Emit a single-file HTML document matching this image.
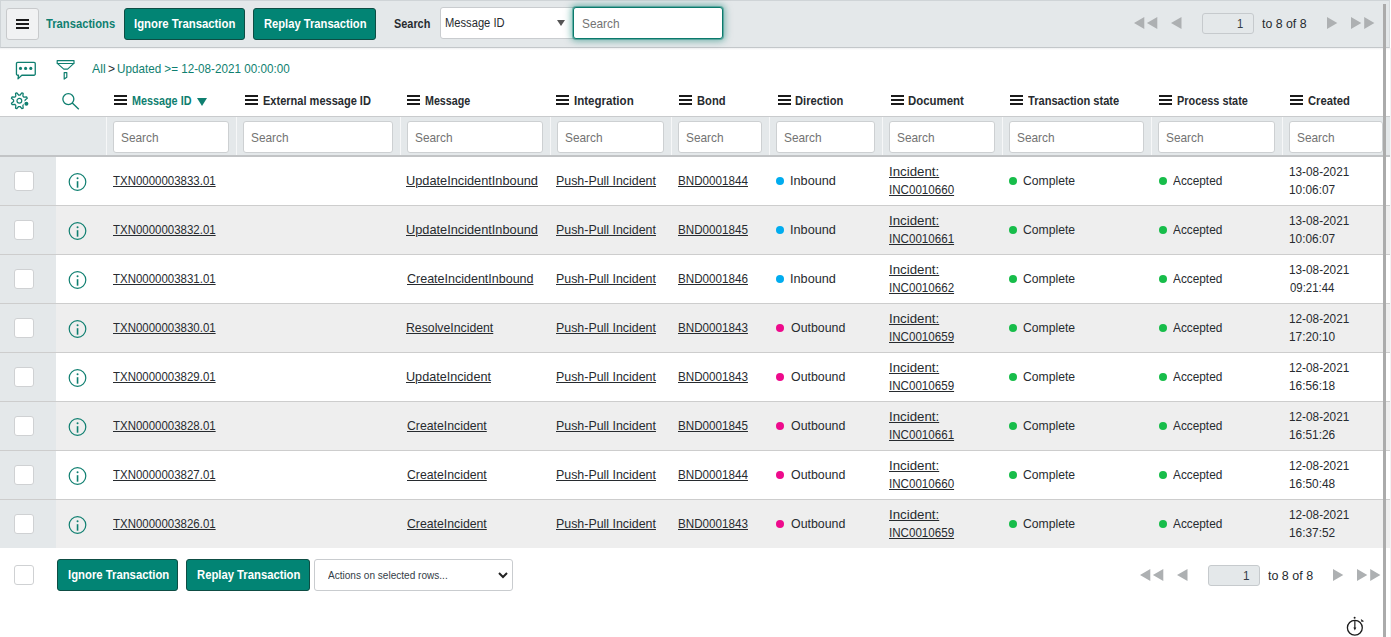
<!DOCTYPE html>
<html><head><meta charset="utf-8">
<style>
html,body{margin:0;padding:0;width:1391px;height:637px;overflow:hidden;background:#fff;position:relative;font-family:"Liberation Sans",sans-serif;}
.a{position:absolute;box-sizing:border-box;}
.t{position:absolute;white-space:nowrap;line-height:20px;transform-origin:0 0;font-family:"Liberation Sans",sans-serif;}
svg{position:absolute;overflow:visible;}
</style></head><body>
<div class="a" style="left:0px;top:0px;width:1390px;height:48px;background:#e4e8ea;border-top:1px solid #cfd4d7;border-left:1px solid #cfd4d7;border-right:1px solid #d6dadd;border-bottom:1px solid #c3c7ca"></div>
<div class="a" style="left:0px;top:48px;width:1390px;height:2px;background:linear-gradient(#eef0f1,#fff)"></div>
<div class="a" style="left:6px;top:8px;width:33px;height:32px;background:#f1f2f3;border:1px solid #c8cacc;border-radius:3px"></div>
<div class="a" style="left:16px;top:19px;width:13px;height:2px;background:#1b1b1b"></div><div class="a" style="left:16px;top:23px;width:13px;height:2px;background:#1b1b1b"></div><div class="a" style="left:16px;top:27px;width:13px;height:2px;background:#1b1b1b"></div>
<div class="a" style="left:124px;top:8px;width:121px;height:32px;background:#028474;border:1px solid #0e4d44;border-radius:3px"></div>
<div class="a" style="left:253px;top:8px;width:123px;height:32px;background:#028474;border:1px solid #0e4d44;border-radius:3px"></div>
<div class="a" style="left:440px;top:7px;width:140px;height:32px;background:#fff;border:1px solid #c9cccf;border-radius:3px"></div>
<svg style="left:557px;top:20px" width="8" height="6"><path d="M0 0h8L4 6z" fill="#555"/></svg>
<div class="a" style="left:573px;top:7px;width:150px;height:32px;background:#fff;border:1px solid #0b7a6c;border-radius:3px;box-shadow:0 0 0 1px rgba(0,125,110,.4),0 0 7px 2px rgba(0,125,110,.5)"></div>
<svg style="left:1133.6px;top:17px" width="24" height="12"><path d="M0 6L10.3 0V12z M12.9 6L23.3 0V12z" fill="#adb0b2"/></svg>
<svg style="left:1171px;top:17px" width="11" height="12"><path d="M0 6L10.5 0V12z" fill="#adb0b2"/></svg>
<div class="a" style="left:1202px;top:13px;width:52px;height:21px;background:#e4e8ea;border:1px solid #c6cacd;border-radius:3px"></div>
<svg style="left:1327px;top:17px" width="11" height="12"><path d="M10.3 6L0 0V12z" fill="#adb0b2"/></svg>
<svg style="left:1351.4px;top:17px" width="24" height="12"><path d="M10.3 6L0 0V12z M23.4 6L13.2 0V12z" fill="#adb0b2"/></svg>
<svg style="left:15px;top:61px" width="22" height="20"><path d="M3.5 14.25H2.7a1.25 1.25 0 0 1-1.25-1.25V2.7A1.25 1.25 0 0 1 2.7 1.45h16.3a1.25 1.25 0 0 1 1.25 1.25V13a1.25 1.25 0 0 1-1.25 1.25H6.8L3 17.9z" fill="none" stroke="#0f7f70" stroke-width="1.3" stroke-linejoin="round"/><circle cx="5.5" cy="7.4" r="1.55" fill="#0f7f70"/><circle cx="10.6" cy="7.4" r="1.55" fill="#0f7f70"/><circle cx="15.8" cy="7.4" r="1.55" fill="#0f7f70"/></svg>
<svg style="left:56px;top:59px" width="20" height="22"><path d="M1.2 1.6H18V4.5H1.2Z M1.6 4.6L7.8 10.1H11.6L17.6 4.6 M8.2 13.6H10.8V18.3L8.2 20.1Z" fill="none" stroke="#0f7f70" stroke-width="1.2" stroke-linejoin="round"/></svg>
<svg style="left:9px;top:90px" width="22" height="22"><path d="M11.11 5.00 L12.85 2.83 L14.18 3.39 L13.88 6.15 L14.95 7.22 L17.71 6.92 L18.27 8.25 L16.10 9.99 L16.10 11.51 L18.27 13.25 L17.71 14.58 L14.95 14.28 L13.88 15.35 L14.18 18.11 L12.85 18.67 L11.11 16.50 L9.59 16.50 L7.85 18.67 L6.52 18.11 L6.82 15.35 L5.75 14.28 L2.99 14.58 L2.43 13.25 L4.60 11.51 L4.60 9.99 L2.43 8.25 L2.99 6.92 L5.75 7.22 L6.82 6.15 L6.52 3.39 L7.85 2.83 L9.59 5.00Z" fill="none" stroke="#0f7f70" stroke-width="1.25" stroke-linejoin="round"/><circle cx="10.35" cy="10.75" r="2.4" fill="none" stroke="#0f7f70" stroke-width="1.2"/><circle cx="17.4" cy="13.7" r="2.9" fill="#fff"/><circle cx="17.4" cy="13.7" r="2" fill="#0f7f70"/></svg>
<svg style="left:61px;top:92px" width="20" height="20"><circle cx="7.35" cy="7.1" r="5.5" fill="none" stroke="#0f7f70" stroke-width="1.3"/><path d="M11.3 11.1L17.8 17.2" stroke="#0f7f70" stroke-width="1.4"/></svg>
<div class="a" style="left:114px;top:95px;width:13px;height:2px;background:#1b1b1b"></div><div class="a" style="left:114px;top:99px;width:13px;height:2px;background:#1b1b1b"></div><div class="a" style="left:114px;top:103px;width:13px;height:2px;background:#1b1b1b"></div>
<div class="a" style="left:245px;top:95px;width:13px;height:2px;background:#1b1b1b"></div><div class="a" style="left:245px;top:99px;width:13px;height:2px;background:#1b1b1b"></div><div class="a" style="left:245px;top:103px;width:13px;height:2px;background:#1b1b1b"></div>
<div class="a" style="left:407px;top:95px;width:13px;height:2px;background:#1b1b1b"></div><div class="a" style="left:407px;top:99px;width:13px;height:2px;background:#1b1b1b"></div><div class="a" style="left:407px;top:103px;width:13px;height:2px;background:#1b1b1b"></div>
<div class="a" style="left:556px;top:95px;width:13px;height:2px;background:#1b1b1b"></div><div class="a" style="left:556px;top:99px;width:13px;height:2px;background:#1b1b1b"></div><div class="a" style="left:556px;top:103px;width:13px;height:2px;background:#1b1b1b"></div>
<div class="a" style="left:679px;top:95px;width:13px;height:2px;background:#1b1b1b"></div><div class="a" style="left:679px;top:99px;width:13px;height:2px;background:#1b1b1b"></div><div class="a" style="left:679px;top:103px;width:13px;height:2px;background:#1b1b1b"></div>
<div class="a" style="left:778px;top:95px;width:13px;height:2px;background:#1b1b1b"></div><div class="a" style="left:778px;top:99px;width:13px;height:2px;background:#1b1b1b"></div><div class="a" style="left:778px;top:103px;width:13px;height:2px;background:#1b1b1b"></div>
<div class="a" style="left:891px;top:95px;width:13px;height:2px;background:#1b1b1b"></div><div class="a" style="left:891px;top:99px;width:13px;height:2px;background:#1b1b1b"></div><div class="a" style="left:891px;top:103px;width:13px;height:2px;background:#1b1b1b"></div>
<div class="a" style="left:1010px;top:95px;width:13px;height:2px;background:#1b1b1b"></div><div class="a" style="left:1010px;top:99px;width:13px;height:2px;background:#1b1b1b"></div><div class="a" style="left:1010px;top:103px;width:13px;height:2px;background:#1b1b1b"></div>
<div class="a" style="left:1159px;top:95px;width:13px;height:2px;background:#1b1b1b"></div><div class="a" style="left:1159px;top:99px;width:13px;height:2px;background:#1b1b1b"></div><div class="a" style="left:1159px;top:103px;width:13px;height:2px;background:#1b1b1b"></div>
<div class="a" style="left:1290px;top:95px;width:13px;height:2px;background:#1b1b1b"></div><div class="a" style="left:1290px;top:99px;width:13px;height:2px;background:#1b1b1b"></div><div class="a" style="left:1290px;top:103px;width:13px;height:2px;background:#1b1b1b"></div>
<svg style="left:197px;top:98px" width="10" height="8"><path d="M0 0h10L5 8z" fill="#0f7f70"/></svg>
<div class="a" style="left:0px;top:116px;width:1390px;height:41px;background:#e4e8ea;border-top:1px solid #c9cbcd;border-bottom:2px solid #c2c4c6"></div>
<div class="a" style="left:106px;top:117px;width:1px;height:38px;background:#f6f7f8"></div>
<div class="a" style="left:113px;top:121px;width:116px;height:32px;background:#fff;border:1px solid #cdd0d2;border-radius:3px"></div>
<div class="a" style="left:236px;top:117px;width:1px;height:38px;background:#f6f7f8"></div>
<div class="a" style="left:243px;top:121px;width:150px;height:32px;background:#fff;border:1px solid #cdd0d2;border-radius:3px"></div>
<div class="a" style="left:400px;top:117px;width:1px;height:38px;background:#f6f7f8"></div>
<div class="a" style="left:407px;top:121px;width:136px;height:32px;background:#fff;border:1px solid #cdd0d2;border-radius:3px"></div>
<div class="a" style="left:550px;top:117px;width:1px;height:38px;background:#f6f7f8"></div>
<div class="a" style="left:557px;top:121px;width:107px;height:32px;background:#fff;border:1px solid #cdd0d2;border-radius:3px"></div>
<div class="a" style="left:671px;top:117px;width:1px;height:38px;background:#f6f7f8"></div>
<div class="a" style="left:678px;top:121px;width:84px;height:32px;background:#fff;border:1px solid #cdd0d2;border-radius:3px"></div>
<div class="a" style="left:769px;top:117px;width:1px;height:38px;background:#f6f7f8"></div>
<div class="a" style="left:776px;top:121px;width:99px;height:32px;background:#fff;border:1px solid #cdd0d2;border-radius:3px"></div>
<div class="a" style="left:882px;top:117px;width:1px;height:38px;background:#f6f7f8"></div>
<div class="a" style="left:889px;top:121px;width:106px;height:32px;background:#fff;border:1px solid #cdd0d2;border-radius:3px"></div>
<div class="a" style="left:1002px;top:117px;width:1px;height:38px;background:#f6f7f8"></div>
<div class="a" style="left:1009px;top:121px;width:135px;height:32px;background:#fff;border:1px solid #cdd0d2;border-radius:3px"></div>
<div class="a" style="left:1151px;top:117px;width:1px;height:38px;background:#f6f7f8"></div>
<div class="a" style="left:1158px;top:121px;width:117px;height:32px;background:#fff;border:1px solid #cdd0d2;border-radius:3px"></div>
<div class="a" style="left:1282px;top:117px;width:1px;height:38px;background:#f6f7f8"></div>
<div class="a" style="left:1289px;top:121px;width:94px;height:32px;background:#fff;border:1px solid #cdd0d2;border-radius:3px"></div>
<div class="a" style="left:0px;top:157px;width:1390px;height:49px;background:#fff;border-bottom:1px solid #cdcdcd"></div>
<div class="a" style="left:0px;top:157px;width:56px;height:49px;background:#e4e8ea;border-bottom:1px solid #cdcdcd"></div>
<div class="a" style="left:14px;top:171px;width:20px;height:20px;background:#fff;border:1px solid #cfd1d3;border-radius:3px"></div>
<svg style="left:68px;top:172px" width="20" height="20"><circle cx="9.5" cy="10" r="8.3" fill="none" stroke="#0f7f70" stroke-width="1.2"/><rect x="8.75" y="9.2" width="1.6" height="6.5" fill="#0f7f70"/><circle cx="9.55" cy="6.2" r="1" fill="#0f7f70"/></svg>
<div class="a" style="left:776px;top:177px;width:8px;height:8px;border-radius:50%;background:#00acef"></div>
<div class="a" style="left:1009px;top:177px;width:8px;height:8px;border-radius:50%;background:#17bd4a"></div>
<div class="a" style="left:1159px;top:177px;width:8px;height:8px;border-radius:50%;background:#17bd4a"></div>
<div class="a" style="left:0px;top:206px;width:1390px;height:49px;background:#eeeeee;border-bottom:1px solid #cdcdcd"></div>
<div class="a" style="left:0px;top:206px;width:56px;height:49px;background:#e4e8ea;border-bottom:1px solid #cdcdcd"></div>
<div class="a" style="left:14px;top:220px;width:20px;height:20px;background:#fff;border:1px solid #cfd1d3;border-radius:3px"></div>
<svg style="left:68px;top:221px" width="20" height="20"><circle cx="9.5" cy="10" r="8.3" fill="none" stroke="#0f7f70" stroke-width="1.2"/><rect x="8.75" y="9.2" width="1.6" height="6.5" fill="#0f7f70"/><circle cx="9.55" cy="6.2" r="1" fill="#0f7f70"/></svg>
<div class="a" style="left:776px;top:226px;width:8px;height:8px;border-radius:50%;background:#00acef"></div>
<div class="a" style="left:1009px;top:226px;width:8px;height:8px;border-radius:50%;background:#17bd4a"></div>
<div class="a" style="left:1159px;top:226px;width:8px;height:8px;border-radius:50%;background:#17bd4a"></div>
<div class="a" style="left:0px;top:255px;width:1390px;height:49px;background:#fff;border-bottom:1px solid #cdcdcd"></div>
<div class="a" style="left:0px;top:255px;width:56px;height:49px;background:#e4e8ea;border-bottom:1px solid #cdcdcd"></div>
<div class="a" style="left:14px;top:269px;width:20px;height:20px;background:#fff;border:1px solid #cfd1d3;border-radius:3px"></div>
<svg style="left:68px;top:270px" width="20" height="20"><circle cx="9.5" cy="10" r="8.3" fill="none" stroke="#0f7f70" stroke-width="1.2"/><rect x="8.75" y="9.2" width="1.6" height="6.5" fill="#0f7f70"/><circle cx="9.55" cy="6.2" r="1" fill="#0f7f70"/></svg>
<div class="a" style="left:776px;top:275px;width:8px;height:8px;border-radius:50%;background:#00acef"></div>
<div class="a" style="left:1009px;top:275px;width:8px;height:8px;border-radius:50%;background:#17bd4a"></div>
<div class="a" style="left:1159px;top:275px;width:8px;height:8px;border-radius:50%;background:#17bd4a"></div>
<div class="a" style="left:0px;top:304px;width:1390px;height:49px;background:#eeeeee;border-bottom:1px solid #cdcdcd"></div>
<div class="a" style="left:0px;top:304px;width:56px;height:49px;background:#e4e8ea;border-bottom:1px solid #cdcdcd"></div>
<div class="a" style="left:14px;top:318px;width:20px;height:20px;background:#fff;border:1px solid #cfd1d3;border-radius:3px"></div>
<svg style="left:68px;top:319px" width="20" height="20"><circle cx="9.5" cy="10" r="8.3" fill="none" stroke="#0f7f70" stroke-width="1.2"/><rect x="8.75" y="9.2" width="1.6" height="6.5" fill="#0f7f70"/><circle cx="9.55" cy="6.2" r="1" fill="#0f7f70"/></svg>
<div class="a" style="left:776px;top:324px;width:8px;height:8px;border-radius:50%;background:#ee0a8c"></div>
<div class="a" style="left:1009px;top:324px;width:8px;height:8px;border-radius:50%;background:#17bd4a"></div>
<div class="a" style="left:1159px;top:324px;width:8px;height:8px;border-radius:50%;background:#17bd4a"></div>
<div class="a" style="left:0px;top:353px;width:1390px;height:49px;background:#fff;border-bottom:1px solid #cdcdcd"></div>
<div class="a" style="left:0px;top:353px;width:56px;height:49px;background:#e4e8ea;border-bottom:1px solid #cdcdcd"></div>
<div class="a" style="left:14px;top:367px;width:20px;height:20px;background:#fff;border:1px solid #cfd1d3;border-radius:3px"></div>
<svg style="left:68px;top:368px" width="20" height="20"><circle cx="9.5" cy="10" r="8.3" fill="none" stroke="#0f7f70" stroke-width="1.2"/><rect x="8.75" y="9.2" width="1.6" height="6.5" fill="#0f7f70"/><circle cx="9.55" cy="6.2" r="1" fill="#0f7f70"/></svg>
<div class="a" style="left:776px;top:373px;width:8px;height:8px;border-radius:50%;background:#ee0a8c"></div>
<div class="a" style="left:1009px;top:373px;width:8px;height:8px;border-radius:50%;background:#17bd4a"></div>
<div class="a" style="left:1159px;top:373px;width:8px;height:8px;border-radius:50%;background:#17bd4a"></div>
<div class="a" style="left:0px;top:402px;width:1390px;height:49px;background:#eeeeee;border-bottom:1px solid #cdcdcd"></div>
<div class="a" style="left:0px;top:402px;width:56px;height:49px;background:#e4e8ea;border-bottom:1px solid #cdcdcd"></div>
<div class="a" style="left:14px;top:416px;width:20px;height:20px;background:#fff;border:1px solid #cfd1d3;border-radius:3px"></div>
<svg style="left:68px;top:417px" width="20" height="20"><circle cx="9.5" cy="10" r="8.3" fill="none" stroke="#0f7f70" stroke-width="1.2"/><rect x="8.75" y="9.2" width="1.6" height="6.5" fill="#0f7f70"/><circle cx="9.55" cy="6.2" r="1" fill="#0f7f70"/></svg>
<div class="a" style="left:776px;top:422px;width:8px;height:8px;border-radius:50%;background:#ee0a8c"></div>
<div class="a" style="left:1009px;top:422px;width:8px;height:8px;border-radius:50%;background:#17bd4a"></div>
<div class="a" style="left:1159px;top:422px;width:8px;height:8px;border-radius:50%;background:#17bd4a"></div>
<div class="a" style="left:0px;top:451px;width:1390px;height:49px;background:#fff;border-bottom:1px solid #cdcdcd"></div>
<div class="a" style="left:0px;top:451px;width:56px;height:49px;background:#e4e8ea;border-bottom:1px solid #cdcdcd"></div>
<div class="a" style="left:14px;top:465px;width:20px;height:20px;background:#fff;border:1px solid #cfd1d3;border-radius:3px"></div>
<svg style="left:68px;top:466px" width="20" height="20"><circle cx="9.5" cy="10" r="8.3" fill="none" stroke="#0f7f70" stroke-width="1.2"/><rect x="8.75" y="9.2" width="1.6" height="6.5" fill="#0f7f70"/><circle cx="9.55" cy="6.2" r="1" fill="#0f7f70"/></svg>
<div class="a" style="left:776px;top:471px;width:8px;height:8px;border-radius:50%;background:#ee0a8c"></div>
<div class="a" style="left:1009px;top:471px;width:8px;height:8px;border-radius:50%;background:#17bd4a"></div>
<div class="a" style="left:1159px;top:471px;width:8px;height:8px;border-radius:50%;background:#17bd4a"></div>
<div class="a" style="left:0px;top:500px;width:1390px;height:48px;background:#eeeeee"></div>
<div class="a" style="left:0px;top:500px;width:56px;height:48px;background:#e4e8ea"></div>
<div class="a" style="left:14px;top:514px;width:20px;height:20px;background:#fff;border:1px solid #cfd1d3;border-radius:3px"></div>
<svg style="left:68px;top:515px" width="20" height="20"><circle cx="9.5" cy="10" r="8.3" fill="none" stroke="#0f7f70" stroke-width="1.2"/><rect x="8.75" y="9.2" width="1.6" height="6.5" fill="#0f7f70"/><circle cx="9.55" cy="6.2" r="1" fill="#0f7f70"/></svg>
<div class="a" style="left:776px;top:520px;width:8px;height:8px;border-radius:50%;background:#ee0a8c"></div>
<div class="a" style="left:1009px;top:520px;width:8px;height:8px;border-radius:50%;background:#17bd4a"></div>
<div class="a" style="left:1159px;top:520px;width:8px;height:8px;border-radius:50%;background:#17bd4a"></div>
<div class="a" style="left:14px;top:565px;width:20px;height:20px;background:#fff;border:1px solid #cfd1d3;border-radius:3px"></div>
<div class="a" style="left:57px;top:559px;width:121px;height:32px;background:#028474;border:1px solid #0e4d44;border-radius:3px"></div>
<div class="a" style="left:186px;top:559px;width:124px;height:32px;background:#028474;border:1px solid #0e4d44;border-radius:3px"></div>
<div class="a" style="left:314px;top:559px;width:199px;height:32px;background:#fff;border:1px solid #c9cccf;border-radius:3px"></div>
<svg style="left:498px;top:572px" width="10" height="7"><path d="M1 1l4 4 4-4" fill="none" stroke="#222" stroke-width="2"/></svg>
<svg style="left:1139.8px;top:569px" width="24" height="12"><path d="M0 6L10.3 0V12z M12.9 6L23.3 0V12z" fill="#adb0b2"/></svg>
<svg style="left:1177px;top:569px" width="11" height="12"><path d="M0 6L10.5 0V12z" fill="#adb0b2"/></svg>
<div class="a" style="left:1208px;top:565px;width:52px;height:21px;background:#e4e8ea;border:1px solid #c6cacd;border-radius:3px"></div>
<svg style="left:1333.2px;top:569px" width="11" height="12"><path d="M10.3 6L0 0V12z" fill="#adb0b2"/></svg>
<svg style="left:1357.2px;top:569px" width="24" height="12"><path d="M10.3 6L0 0V12z M23.4 6L13.2 0V12z" fill="#adb0b2"/></svg>
<svg style="left:1345px;top:615px" width="22" height="22"><circle cx="9.85" cy="12.75" r="7.45" fill="none" stroke="#1b1b1b" stroke-width="1.3"/><path d="M9.85 5.3v8.2" stroke="#1b1b1b" stroke-width="1.2"/><path d="M8.4 12.6h2.9l-1.45 3z" fill="#1b1b1b"/><circle cx="9.6" cy="2.7" r="1" fill="#1b1b1b"/><path d="M15.8 4.1l3.3 2.1-2.5 0.9z" fill="#1b1b1b"/></svg>
<div class="a" style="left:1383px;top:4px;width:3px;height:633px;background:#ababab"></div>
<div class="a" style="left:1390px;top:48px;width:1px;height:589px;background:#f3f4f5"></div>
<span class="t" style="left:46.00px;top:14.0px;font-size:13px;font-weight:700;color:#0f7f70;transform:scaleX(0.8625);">Transactions</span>
<span class="t" style="left:134.00px;top:14.0px;font-size:12px;font-weight:700;color:#ffffff;transform:scaleX(0.9439);">Ignore Transaction</span>
<span class="t" style="left:263.70px;top:14.0px;font-size:12px;font-weight:700;color:#ffffff;transform:scaleX(0.9318);">Replay Transaction</span>
<span class="t" style="left:393.70px;top:14.0px;font-size:12px;font-weight:700;color:#272b2f;transform:scaleX(0.9075);">Search</span>
<span class="t" style="left:445.41px;top:13.0px;font-size:12.5px;font-weight:400;color:#272b2f;transform:scaleX(0.8939);">Message ID</span>
<span class="t" style="left:582.09px;top:14.0px;font-size:13px;font-weight:400;color:#737373;transform:scaleX(0.9100);">Search</span>
<span class="t" style="left:1262.00px;top:14.0px;font-size:13px;font-weight:400;color:#272b2f;transform:scaleX(0.9489);">to 8 of 8</span>
<span class="t" style="left:1237.43px;top:14.0px;font-size:13px;font-weight:400;color:#343d47;transform:scaleX(0.8667);">1</span>
<span class="t" style="left:92.30px;top:59.0px;font-size:13px;font-weight:400;color:#0f7f70;transform:scaleX(0.9429);">All</span>
<span class="t" style="left:107.70px;top:59.0px;font-size:13px;font-weight:400;color:#272b2f;transform:scaleX(0.9286);">&gt;</span>
<span class="t" style="left:116.60px;top:59.0px;font-size:13px;font-weight:400;color:#0f7f70;transform:scaleX(0.8979);">Updated &gt;= 12-08-2021 00:00:00</span>
<span class="t" style="left:131.50px;top:91.0px;font-size:12px;font-weight:700;color:#0f7f70;transform:scaleX(0.9000);">Message ID</span>
<span class="t" style="left:262.50px;top:91.0px;font-size:12px;font-weight:700;color:#272b2f;transform:scaleX(0.9188);">External message ID</span>
<span class="t" style="left:424.50px;top:91.0px;font-size:12px;font-weight:700;color:#272b2f;transform:scaleX(0.8922);">Message</span>
<span class="t" style="left:574.00px;top:91.0px;font-size:12px;font-weight:700;color:#272b2f;transform:scaleX(0.9629);">Integration</span>
<span class="t" style="left:696.60px;top:91.0px;font-size:12px;font-weight:700;color:#272b2f;transform:scaleX(0.9300);">Bond</span>
<span class="t" style="left:795.00px;top:91.0px;font-size:12px;font-weight:700;color:#272b2f;transform:scaleX(0.9288);">Direction</span>
<span class="t" style="left:908.30px;top:91.0px;font-size:12px;font-weight:700;color:#272b2f;transform:scaleX(0.9508);">Document</span>
<span class="t" style="left:1028.00px;top:91.0px;font-size:12px;font-weight:700;color:#272b2f;transform:scaleX(0.9242);">Transaction state</span>
<span class="t" style="left:1176.50px;top:91.0px;font-size:12px;font-weight:700;color:#272b2f;transform:scaleX(0.9077);">Process state</span>
<span class="t" style="left:1307.90px;top:91.0px;font-size:12px;font-weight:700;color:#272b2f;transform:scaleX(0.9341);">Created</span>
<span class="t" style="left:121.39px;top:128.0px;font-size:13px;font-weight:400;color:#737373;transform:scaleX(0.9125);">Search</span>
<span class="t" style="left:251.39px;top:128.0px;font-size:13px;font-weight:400;color:#737373;transform:scaleX(0.9125);">Search</span>
<span class="t" style="left:414.89px;top:128.0px;font-size:13px;font-weight:400;color:#737373;transform:scaleX(0.9125);">Search</span>
<span class="t" style="left:565.39px;top:128.0px;font-size:13px;font-weight:400;color:#737373;transform:scaleX(0.9125);">Search</span>
<span class="t" style="left:686.39px;top:128.0px;font-size:13px;font-weight:400;color:#737373;transform:scaleX(0.9125);">Search</span>
<span class="t" style="left:784.39px;top:128.0px;font-size:13px;font-weight:400;color:#737373;transform:scaleX(0.9125);">Search</span>
<span class="t" style="left:897.39px;top:128.0px;font-size:13px;font-weight:400;color:#737373;transform:scaleX(0.9125);">Search</span>
<span class="t" style="left:1016.89px;top:128.0px;font-size:13px;font-weight:400;color:#737373;transform:scaleX(0.9125);">Search</span>
<span class="t" style="left:1166.39px;top:128.0px;font-size:13px;font-weight:400;color:#737373;transform:scaleX(0.9125);">Search</span>
<span class="t" style="left:1297.39px;top:128.0px;font-size:13px;font-weight:400;color:#737373;transform:scaleX(0.9125);">Search</span>
<span class="t" style="left:113.00px;top:171.0px;font-size:13px;font-weight:400;color:#272b2f;transform:scaleX(0.8819);text-decoration:underline;">TXN0000003833.01</span>
<span class="t" style="left:406.11px;top:171.0px;font-size:13px;font-weight:400;color:#272b2f;transform:scaleX(0.9812);text-decoration:underline;">UpdateIncidentInbound</span>
<span class="t" style="left:555.92px;top:171.0px;font-size:13px;font-weight:400;color:#272b2f;transform:scaleX(0.9538);text-decoration:underline;">Push-Pull Incident</span>
<span class="t" style="left:678.14px;top:171.0px;font-size:13px;font-weight:400;color:#272b2f;transform:scaleX(0.8961);text-decoration:underline;">BND0001844</span>
<span class="t" style="left:790.02px;top:171.0px;font-size:13px;font-weight:400;color:#272b2f;transform:scaleX(0.9761);">Inbound</span>
<span class="t" style="left:889.39px;top:162.0px;font-size:13px;font-weight:400;color:#272b2f;transform:scaleX(1.0213);text-decoration:underline;">Incident:</span>
<span class="t" style="left:889.44px;top:180.0px;font-size:13px;font-weight:400;color:#272b2f;transform:scaleX(0.8917);text-decoration:underline;">INC0010660</span>
<span class="t" style="left:1023.40px;top:171.0px;font-size:13px;font-weight:400;color:#272b2f;transform:scaleX(0.9357);">Complete</span>
<span class="t" style="left:1172.50px;top:171.0px;font-size:13px;font-weight:400;color:#272b2f;transform:scaleX(0.9093);">Accepted</span>
<span class="t" style="left:1289.39px;top:162.0px;font-size:13px;font-weight:400;color:#272b2f;transform:scaleX(0.9062);">13-08-2021</span>
<span class="t" style="left:1289.39px;top:180.0px;font-size:13px;font-weight:400;color:#272b2f;transform:scaleX(0.9122);">10:06:07</span>
<span class="t" style="left:113.00px;top:220.0px;font-size:13px;font-weight:400;color:#272b2f;transform:scaleX(0.8819);text-decoration:underline;">TXN0000003832.01</span>
<span class="t" style="left:406.11px;top:220.0px;font-size:13px;font-weight:400;color:#272b2f;transform:scaleX(0.9812);text-decoration:underline;">UpdateIncidentInbound</span>
<span class="t" style="left:555.92px;top:220.0px;font-size:13px;font-weight:400;color:#272b2f;transform:scaleX(0.9538);text-decoration:underline;">Push-Pull Incident</span>
<span class="t" style="left:678.14px;top:220.0px;font-size:13px;font-weight:400;color:#272b2f;transform:scaleX(0.8961);text-decoration:underline;">BND0001845</span>
<span class="t" style="left:790.02px;top:220.0px;font-size:13px;font-weight:400;color:#272b2f;transform:scaleX(0.9761);">Inbound</span>
<span class="t" style="left:889.39px;top:211.0px;font-size:13px;font-weight:400;color:#272b2f;transform:scaleX(1.0213);text-decoration:underline;">Incident:</span>
<span class="t" style="left:889.44px;top:229.0px;font-size:13px;font-weight:400;color:#272b2f;transform:scaleX(0.8917);text-decoration:underline;">INC0010661</span>
<span class="t" style="left:1023.40px;top:220.0px;font-size:13px;font-weight:400;color:#272b2f;transform:scaleX(0.9357);">Complete</span>
<span class="t" style="left:1172.50px;top:220.0px;font-size:13px;font-weight:400;color:#272b2f;transform:scaleX(0.9093);">Accepted</span>
<span class="t" style="left:1289.39px;top:211.0px;font-size:13px;font-weight:400;color:#272b2f;transform:scaleX(0.9062);">13-08-2021</span>
<span class="t" style="left:1289.39px;top:229.0px;font-size:13px;font-weight:400;color:#272b2f;transform:scaleX(0.9122);">10:06:07</span>
<span class="t" style="left:113.00px;top:269.0px;font-size:13px;font-weight:400;color:#272b2f;transform:scaleX(0.8819);text-decoration:underline;">TXN0000003831.01</span>
<span class="t" style="left:406.50px;top:269.0px;font-size:13px;font-weight:400;color:#272b2f;transform:scaleX(0.9618);text-decoration:underline;">CreateIncidentInbound</span>
<span class="t" style="left:555.92px;top:269.0px;font-size:13px;font-weight:400;color:#272b2f;transform:scaleX(0.9538);text-decoration:underline;">Push-Pull Incident</span>
<span class="t" style="left:678.14px;top:269.0px;font-size:13px;font-weight:400;color:#272b2f;transform:scaleX(0.8961);text-decoration:underline;">BND0001846</span>
<span class="t" style="left:790.02px;top:269.0px;font-size:13px;font-weight:400;color:#272b2f;transform:scaleX(0.9761);">Inbound</span>
<span class="t" style="left:889.39px;top:260.0px;font-size:13px;font-weight:400;color:#272b2f;transform:scaleX(1.0213);text-decoration:underline;">Incident:</span>
<span class="t" style="left:889.44px;top:278.0px;font-size:13px;font-weight:400;color:#272b2f;transform:scaleX(0.8917);text-decoration:underline;">INC0010662</span>
<span class="t" style="left:1023.40px;top:269.0px;font-size:13px;font-weight:400;color:#272b2f;transform:scaleX(0.9357);">Complete</span>
<span class="t" style="left:1172.50px;top:269.0px;font-size:13px;font-weight:400;color:#272b2f;transform:scaleX(0.9093);">Accepted</span>
<span class="t" style="left:1289.39px;top:260.0px;font-size:13px;font-weight:400;color:#272b2f;transform:scaleX(0.9062);">13-08-2021</span>
<span class="t" style="left:1290.30px;top:278.0px;font-size:13px;font-weight:400;color:#272b2f;transform:scaleX(0.8765);">09:21:44</span>
<span class="t" style="left:113.00px;top:318.0px;font-size:13px;font-weight:400;color:#272b2f;transform:scaleX(0.8819);text-decoration:underline;">TXN0000003830.01</span>
<span class="t" style="left:406.12px;top:318.0px;font-size:13px;font-weight:400;color:#272b2f;transform:scaleX(0.9435);text-decoration:underline;">ResolveIncident</span>
<span class="t" style="left:555.92px;top:318.0px;font-size:13px;font-weight:400;color:#272b2f;transform:scaleX(0.9538);text-decoration:underline;">Push-Pull Incident</span>
<span class="t" style="left:678.14px;top:318.0px;font-size:13px;font-weight:400;color:#272b2f;transform:scaleX(0.8961);text-decoration:underline;">BND0001843</span>
<span class="t" style="left:791.00px;top:318.0px;font-size:13px;font-weight:400;color:#272b2f;transform:scaleX(0.9526);">Outbound</span>
<span class="t" style="left:889.39px;top:309.0px;font-size:13px;font-weight:400;color:#272b2f;transform:scaleX(1.0213);text-decoration:underline;">Incident:</span>
<span class="t" style="left:889.44px;top:327.0px;font-size:13px;font-weight:400;color:#272b2f;transform:scaleX(0.8917);text-decoration:underline;">INC0010659</span>
<span class="t" style="left:1023.40px;top:318.0px;font-size:13px;font-weight:400;color:#272b2f;transform:scaleX(0.9357);">Complete</span>
<span class="t" style="left:1172.50px;top:318.0px;font-size:13px;font-weight:400;color:#272b2f;transform:scaleX(0.9093);">Accepted</span>
<span class="t" style="left:1289.39px;top:309.0px;font-size:13px;font-weight:400;color:#272b2f;transform:scaleX(0.9062);">12-08-2021</span>
<span class="t" style="left:1289.39px;top:327.0px;font-size:13px;font-weight:400;color:#272b2f;transform:scaleX(0.9122);">17:20:10</span>
<span class="t" style="left:113.00px;top:367.0px;font-size:13px;font-weight:400;color:#272b2f;transform:scaleX(0.8819);text-decoration:underline;">TXN0000003829.01</span>
<span class="t" style="left:406.11px;top:367.0px;font-size:13px;font-weight:400;color:#272b2f;transform:scaleX(0.9713);text-decoration:underline;">UpdateIncident</span>
<span class="t" style="left:555.92px;top:367.0px;font-size:13px;font-weight:400;color:#272b2f;transform:scaleX(0.9538);text-decoration:underline;">Push-Pull Incident</span>
<span class="t" style="left:678.14px;top:367.0px;font-size:13px;font-weight:400;color:#272b2f;transform:scaleX(0.8961);text-decoration:underline;">BND0001843</span>
<span class="t" style="left:791.00px;top:367.0px;font-size:13px;font-weight:400;color:#272b2f;transform:scaleX(0.9526);">Outbound</span>
<span class="t" style="left:889.39px;top:358.0px;font-size:13px;font-weight:400;color:#272b2f;transform:scaleX(1.0213);text-decoration:underline;">Incident:</span>
<span class="t" style="left:889.44px;top:376.0px;font-size:13px;font-weight:400;color:#272b2f;transform:scaleX(0.8917);text-decoration:underline;">INC0010659</span>
<span class="t" style="left:1023.40px;top:367.0px;font-size:13px;font-weight:400;color:#272b2f;transform:scaleX(0.9357);">Complete</span>
<span class="t" style="left:1172.50px;top:367.0px;font-size:13px;font-weight:400;color:#272b2f;transform:scaleX(0.9093);">Accepted</span>
<span class="t" style="left:1289.39px;top:358.0px;font-size:13px;font-weight:400;color:#272b2f;transform:scaleX(0.9062);">12-08-2021</span>
<span class="t" style="left:1289.39px;top:376.0px;font-size:13px;font-weight:400;color:#272b2f;transform:scaleX(0.9122);">16:56:18</span>
<span class="t" style="left:113.00px;top:416.0px;font-size:13px;font-weight:400;color:#272b2f;transform:scaleX(0.8819);text-decoration:underline;">TXN0000003828.01</span>
<span class="t" style="left:406.50px;top:416.0px;font-size:13px;font-weight:400;color:#272b2f;transform:scaleX(0.9435);text-decoration:underline;">CreateIncident</span>
<span class="t" style="left:555.92px;top:416.0px;font-size:13px;font-weight:400;color:#272b2f;transform:scaleX(0.9538);text-decoration:underline;">Push-Pull Incident</span>
<span class="t" style="left:678.14px;top:416.0px;font-size:13px;font-weight:400;color:#272b2f;transform:scaleX(0.8961);text-decoration:underline;">BND0001845</span>
<span class="t" style="left:791.00px;top:416.0px;font-size:13px;font-weight:400;color:#272b2f;transform:scaleX(0.9526);">Outbound</span>
<span class="t" style="left:889.39px;top:407.0px;font-size:13px;font-weight:400;color:#272b2f;transform:scaleX(1.0213);text-decoration:underline;">Incident:</span>
<span class="t" style="left:889.44px;top:425.0px;font-size:13px;font-weight:400;color:#272b2f;transform:scaleX(0.8917);text-decoration:underline;">INC0010661</span>
<span class="t" style="left:1023.40px;top:416.0px;font-size:13px;font-weight:400;color:#272b2f;transform:scaleX(0.9357);">Complete</span>
<span class="t" style="left:1172.50px;top:416.0px;font-size:13px;font-weight:400;color:#272b2f;transform:scaleX(0.9093);">Accepted</span>
<span class="t" style="left:1289.39px;top:407.0px;font-size:13px;font-weight:400;color:#272b2f;transform:scaleX(0.9062);">12-08-2021</span>
<span class="t" style="left:1289.39px;top:425.0px;font-size:13px;font-weight:400;color:#272b2f;transform:scaleX(0.9122);">16:51:26</span>
<span class="t" style="left:113.00px;top:465.0px;font-size:13px;font-weight:400;color:#272b2f;transform:scaleX(0.8819);text-decoration:underline;">TXN0000003827.01</span>
<span class="t" style="left:406.50px;top:465.0px;font-size:13px;font-weight:400;color:#272b2f;transform:scaleX(0.9435);text-decoration:underline;">CreateIncident</span>
<span class="t" style="left:555.92px;top:465.0px;font-size:13px;font-weight:400;color:#272b2f;transform:scaleX(0.9538);text-decoration:underline;">Push-Pull Incident</span>
<span class="t" style="left:678.14px;top:465.0px;font-size:13px;font-weight:400;color:#272b2f;transform:scaleX(0.8961);text-decoration:underline;">BND0001844</span>
<span class="t" style="left:791.00px;top:465.0px;font-size:13px;font-weight:400;color:#272b2f;transform:scaleX(0.9526);">Outbound</span>
<span class="t" style="left:889.39px;top:456.0px;font-size:13px;font-weight:400;color:#272b2f;transform:scaleX(1.0213);text-decoration:underline;">Incident:</span>
<span class="t" style="left:889.44px;top:474.0px;font-size:13px;font-weight:400;color:#272b2f;transform:scaleX(0.8917);text-decoration:underline;">INC0010660</span>
<span class="t" style="left:1023.40px;top:465.0px;font-size:13px;font-weight:400;color:#272b2f;transform:scaleX(0.9357);">Complete</span>
<span class="t" style="left:1172.50px;top:465.0px;font-size:13px;font-weight:400;color:#272b2f;transform:scaleX(0.9093);">Accepted</span>
<span class="t" style="left:1289.39px;top:456.0px;font-size:13px;font-weight:400;color:#272b2f;transform:scaleX(0.9062);">12-08-2021</span>
<span class="t" style="left:1289.39px;top:474.0px;font-size:13px;font-weight:400;color:#272b2f;transform:scaleX(0.9122);">16:50:48</span>
<span class="t" style="left:113.00px;top:514.0px;font-size:13px;font-weight:400;color:#272b2f;transform:scaleX(0.8819);text-decoration:underline;">TXN0000003826.01</span>
<span class="t" style="left:406.50px;top:514.0px;font-size:13px;font-weight:400;color:#272b2f;transform:scaleX(0.9435);text-decoration:underline;">CreateIncident</span>
<span class="t" style="left:555.92px;top:514.0px;font-size:13px;font-weight:400;color:#272b2f;transform:scaleX(0.9538);text-decoration:underline;">Push-Pull Incident</span>
<span class="t" style="left:678.14px;top:514.0px;font-size:13px;font-weight:400;color:#272b2f;transform:scaleX(0.8961);text-decoration:underline;">BND0001843</span>
<span class="t" style="left:791.00px;top:514.0px;font-size:13px;font-weight:400;color:#272b2f;transform:scaleX(0.9526);">Outbound</span>
<span class="t" style="left:889.39px;top:505.0px;font-size:13px;font-weight:400;color:#272b2f;transform:scaleX(1.0213);text-decoration:underline;">Incident:</span>
<span class="t" style="left:889.44px;top:523.0px;font-size:13px;font-weight:400;color:#272b2f;transform:scaleX(0.8917);text-decoration:underline;">INC0010659</span>
<span class="t" style="left:1023.40px;top:514.0px;font-size:13px;font-weight:400;color:#272b2f;transform:scaleX(0.9357);">Complete</span>
<span class="t" style="left:1172.50px;top:514.0px;font-size:13px;font-weight:400;color:#272b2f;transform:scaleX(0.9093);">Accepted</span>
<span class="t" style="left:1289.39px;top:505.0px;font-size:13px;font-weight:400;color:#272b2f;transform:scaleX(0.9062);">12-08-2021</span>
<span class="t" style="left:1289.39px;top:523.0px;font-size:13px;font-weight:400;color:#272b2f;transform:scaleX(0.9122);">16:37:52</span>
<span class="t" style="left:67.50px;top:565.0px;font-size:12px;font-weight:700;color:#ffffff;transform:scaleX(0.9430);">Ignore Transaction</span>
<span class="t" style="left:196.50px;top:565.0px;font-size:12px;font-weight:700;color:#ffffff;transform:scaleX(0.9391);">Replay Transaction</span>
<span class="t" style="left:327.80px;top:565.0px;font-size:11.5px;font-weight:400;color:#343d47;transform:scaleX(0.8750);">Actions on selected rows...</span>
<span class="t" style="left:1267.90px;top:566.0px;font-size:13px;font-weight:400;color:#272b2f;transform:scaleX(0.9596);">to 8 of 8</span>
<span class="t" style="left:1242.70px;top:566.0px;font-size:13px;font-weight:400;color:#343d47;transform:scaleX(0.9000);">1</span>
</body></html>
